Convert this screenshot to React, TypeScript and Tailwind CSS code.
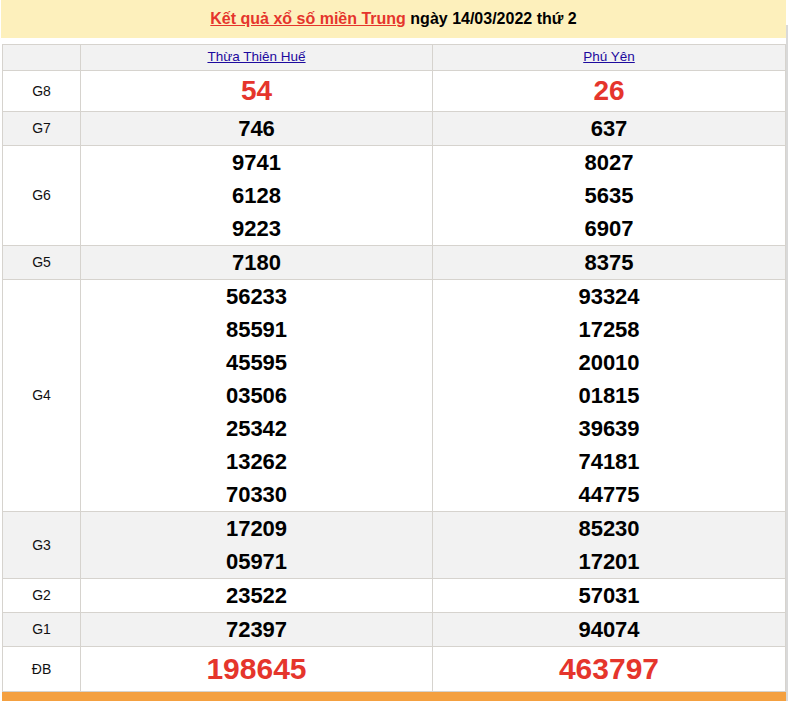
import React from 'react';

type Prize = {
    label: string;
    hue: string;
    size: 'big' | 'normal' | 'special';
    left: string[];
    right: string[];
};

const provinces = ['Thừa Thiên Huế', 'Phú Yên'];

const prizes: Prize[] = [
    { label: 'G8', hue: 'bg-white', size: 'big', left: ['54'], right: ['26'] },
    { label: 'G7', hue: 'bg-[#f2f2f2]', size: 'normal', left: ['746'], right: ['637'] },
    { label: 'G6', hue: 'bg-white', size: 'normal', left: ['9741', '6128', '9223'], right: ['8027', '5635', '6907'] },
    { label: 'G5', hue: 'bg-[#f2f2f2]', size: 'normal', left: ['7180'], right: ['8375'] },
    {
        label: 'G4',
        hue: 'bg-white',
        size: 'normal',
        left: ['56233', '85591', '45595', '03506', '25342', '13262', '70330'],
        right: ['93324', '17258', '20010', '01815', '39639', '74181', '44775'],
    },
    { label: 'G3', hue: 'bg-[#f2f2f2]', size: 'normal', left: ['17209', '05971'], right: ['85230', '17201'] },
    { label: 'G2', hue: 'bg-white', size: 'normal', left: ['23522'], right: ['57031'] },
    { label: 'G1', hue: 'bg-[#f2f2f2]', size: 'normal', left: ['72397'], right: ['94074'] },
    { label: 'ĐB', hue: 'bg-white', size: 'special', left: ['198645'], right: ['463797'] },
];

const NumberCell = ({ values, size }: { values: string[]; size: Prize['size'] }) => (
    <td className="border border-[#d6d3ce] p-0 text-center align-middle">
        {values.map((v) => (
            <div
                key={v}
                className={
                    size === 'big'
                        ? 'text-[28px] leading-[40px] font-bold text-[#e5352c]'
                        : size === 'special'
                        ? 'text-[30px] leading-[44px] font-bold text-[#e5352c]'
                        : 'text-[22px] leading-[33px] font-bold text-black'
                }
            >
                {v}
            </div>
        ))}
    </td>
);

export default function App() {
    return (
        <div className="w-[788px] h-[701px] overflow-hidden bg-white font-['Liberation_Sans',Arial,sans-serif]">
            <div className="flex">
                <div className="w-[786px] pl-[1px]">
                    {/* Title */}
                    <div className="h-[38px] bg-[#fdf0bc] flex items-center justify-center text-[16px] font-bold">
                        <a className="text-[#e5352c] underline">Kết quả xổ số miền Trung</a>
                        <span className="text-black">&nbsp;ngày 14/03/2022 thứ 2</span>
                    </div>

                    {/* Results table */}
                    <table className="mt-[6px] ml-[1px] w-[784px] border-collapse table-fixed">
                        <colgroup>
                            <col className="w-[78px]" />
                            <col className="w-[352px]" />
                            <col />
                        </colgroup>
                        <thead>
                            <tr className="bg-[#f2f2f2] h-[26px]">
                                <th className="border border-[#d6d3ce]" />
                                {provinces.map((p) => (
                                    <th key={p} className="border border-[#d6d3ce] p-0 font-normal text-[13.5px] text-center">
                                        <a className="text-[#1d0a9e] underline">{p}</a>
                                    </th>
                                ))}
                            </tr>
                        </thead>
                        <tbody>
                            {prizes.map((row) => (
                                <tr key={row.label} className={row.hue}>
                                    <td className="border border-[#d6d3ce] p-0 text-center align-middle text-[14px] text-[#111]">
                                        {row.label}
                                    </td>
                                    <NumberCell values={row.left} size={row.size} />
                                    <NumberCell values={row.right} size={row.size} />
                                </tr>
                            ))}
                        </tbody>
                    </table>

                    {/* Footer bar (mostly below the fold) */}
                    <div className="ml-[1px] w-[784px] h-[40px] bg-[#f4a040] flex items-start justify-between px-5 pt-[6px] text-white font-bold">
                        <span className="text-[14px]">Sau đây: Quảng cáo</span>
                        <span className="text-[22px] mr-[40px]">MB</span>
                    </div>
                </div>
                <div className="mt-[25px] w-[2px] h-[700px] bg-[#d9d9d9]" />
            </div>
        </div>
    );
}
